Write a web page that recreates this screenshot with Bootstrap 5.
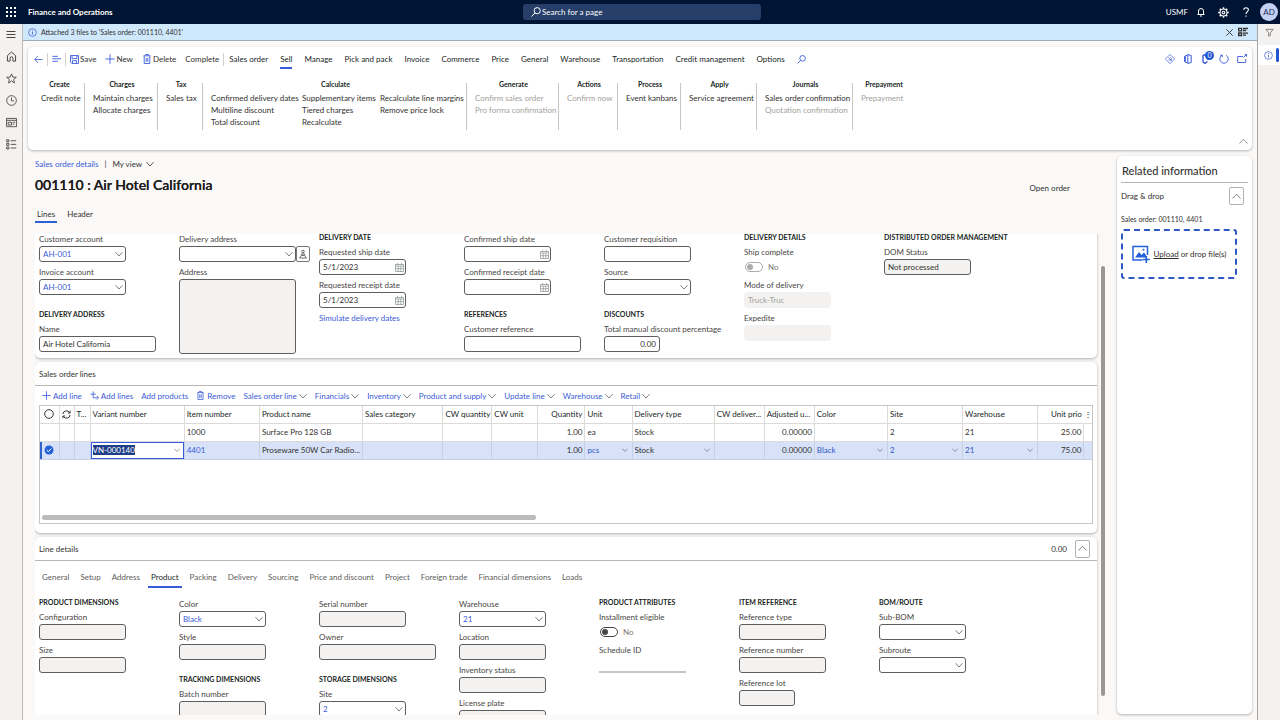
<!DOCTYPE html>
<html lang="en">
<head>
<meta charset="utf-8">
<meta name="viewport" content="width=device-width, initial-scale=1">
<title>Finance and Operations - Sales order 001110</title>
<link href="https://cdn.jsdelivr.net/npm/bootstrap@5.3.0/dist/css/bootstrap.min.css" rel="stylesheet">
<style>
:root{--accent:#3a5bd9;--ink:#323130;--line:#c8c6c4;--chev:url("data:image/svg+xml,%3Csvg xmlns='http://www.w3.org/2000/svg' viewBox='0 0 8 8'%3E%3Cpath d='M.5 2.200 4 6l3.500-3.800' fill='none' stroke='%23605e5c' stroke-width='.8'/%3E%3C/svg%3E");
--cal:url("data:image/svg+xml,%3Csvg xmlns='http://www.w3.org/2000/svg' viewBox='0 0 9 9' fill='none' stroke='%238a9092' stroke-width='.7'%3E%3Cpath d='M.5 1.500h8v7h-8zM.5 3h8M2.500 0v2M6.500 0v2M3.200 3v5.500M5.800 3v5.500M.5 5.700h8'/%3E%3C/svg%3E")}
body{font-family:Lato,"Open Sans",sans-serif;font-size:8px;line-height:12px;color:var(--ink);background:#faf9f8}
svg{fill:none;stroke:currentColor;display:block;flex:none}
.i7{width:8px;height:8px}.i9{width:9px;height:9px}.i10{width:10px;height:10px}.i11{width:11px;height:11px}.i18{width:18px;height:18px}
button,.plain{background:none;border:0;padding:0;color:inherit;font:inherit;text-decoration:none;white-space:nowrap}
.topbar{height:24px;background:#001433;color:#fff;padding:0 2px 0 6px}
.topbar .side{flex:1 1 0}
.topbar .brand{font-weight:700}
.top-icons{gap:12px;margin:0 9px 0 8px}
.search-wrap{width:238px;height:16px;background:#263e68;border-radius:3px;padding:0 8px;gap:1px}
.search-wrap input{background:none;border:0;color:#fff;font-size:8px;padding:0;outline:0;line-height:14px}
.search-wrap input::placeholder{color:#fff;opacity:1}
.avatar{width:18px;height:18px;border-radius:50%;background:#c3d0f2;color:#1b2f5c}
.rail{width:23px;background:#f3f2f1;border-right:1px solid #bdbbb9;padding-top:6px;gap:11px;color:#484644}
.rail-end{width:23px;background:#f3f2f1;border-left:1px solid #a8a6a4;color:#605e5c}
.rail-end .active{background:#fff;color:var(--accent);height:20px;gap:3px;padding-right:1px}
.rail-end .active::after{content:"";width:3px;height:14px;border-radius:2px;background:#1f55d0}
.msg{height:17px;background:#d0e8fb;border-bottom:1px solid #a0abb3;padding:0 9px 0 5px}
.caption7{font-size:7px}
.panel-card{background:#fff;border-radius:5px;box-shadow:0 1px 3px rgba(0,0,0,.28)}
.ribbon{margin:6px 5px 0 5px;height:103px}
.actions{height:24px;padding:0 5px 0 6px}
.actions .act{display:flex;align-items:center;gap:1px;margin-right:9px}
.actions .tabs{gap:12px;margin-left:5px;color:#201f1e;text-shadow:0 0 .3px #201f1e}
.actions .tabs .on,.subtabs .on{box-shadow:inset 0 -2px 0 var(--accent);color:#201f1e}
.sep{width:1px;height:13px;background:#d2d0ce}
.tool{color:var(--accent)}
.groups{display:grid;grid-template-columns:50px 73px 45px 264px 92px 59px 63px 76px 96px 60px;margin-left:7px;padding-top:8px}
.groups section{height:47px;border-right:1px solid #c8c6c4;padding-left:6px}
.groups section:not(:first-child){padding-left:8px}
.groups section:last-child{border:0}
.groups h2{font-size:7px;font-weight:700;line-height:12px;margin:-5px 6px 2px 0;text-align:center;color:#201f1e}
.groups button{display:block;line-height:12px;text-align:left}
.groups button:disabled{color:#a19f9d}
.cols{display:grid;grid-template-columns:91px 78px auto}
.mainpane{padding:8px 6px 5px 12px}
.crumb{gap:6px}
.heading-title{font-size:14px;line-height:20px;font-weight:600;color:#201f1e;text-shadow:0 0 .3px #201f1e}
.titlebar{margin:5px 0 7px}
.status{margin-right:41px;padding-top:6px}
.pagetabs{margin:3px 0 11px}
.pagetabs button{padding:3px 2px}
.pagetabs .on{box-shadow:inset 0 -2px 0 #2f62d0}
.scrollzone{overflow:hidden;flex:1 1 0;min-height:0}
.scrollzone>.stack{margin-right:4px}
.fast{background:#fff;border-radius:5px;box-shadow:0 1px 3px rgba(0,0,0,.3);margin-bottom:4px}
.fast-top{border-radius:0 0 5px 5px;padding:0 4px 2px;margin-top:-3px}
.fast-head{height:24px;border-bottom:1px solid #b9b7b5;padding:0 7px 0 4px}
.fast-grid{padding-bottom:9px}
.vbar{width:4px;height:430px;border-radius:2px;background:#9a9896;margin:32px 6px 0 0}
.fields{display:grid;grid-template-columns:repeat(6,140px) 1fr}
.fields.upper{grid-template-columns:140px 140px 145px 140px 140px 140px 1fr}
.fields h3{font-size:7px;font-weight:700;line-height:13px;margin:0 0 2px;color:#201f1e;white-space:nowrap}
.fields .fld+h3{margin-top:13px}
.nohead{padding-top:2px}
.fld{margin-bottom:4px;width:87px}
.fld.wide{width:117px}.fld.slim{width:56px}
.fld label,.fld .lab{display:block;line-height:13px;height:13px;white-space:nowrap;color:#484644}
.fld .form-control,.fld .form-select{display:block;height:16px;min-height:0;padding:0 3px;font-size:8px;line-height:14px;border:1px solid #605e5c;border-radius:3px;background-color:#fff;color:var(--ink)}
.fld .form-select{background-image:var(--chev);background-size:8px 8px;background-position:right 2px center;color:var(--accent)}
.fld .form-control[readonly]{background-color:#f3f2f1}
.fld .form-control:disabled{background-color:#f3f2f1;border-color:#f3f2f1;color:#a19f9d}
.fld .date{background-image:var(--cal);background-size:9px 9px;background-position:right 1px center;background-repeat:no-repeat}
.fld textarea.form-control{height:75px;resize:none}
.fld .line-only{border:0;border-bottom:2px solid var(--line);border-radius:0}
.addr{width:131px}
.pinbtn{width:14px;height:16px;border:1px solid #797775;border-radius:2px}
.fld .switch{height:16px;min-height:0;margin:0;padding:0;display:flex;align-items:center;gap:5px;color:#797775}
.fld .switch .form-check-input{width:18px;height:10px;margin:0 0 1px 1px;float:none;border-color:#484644;background-color:#fff;background-size:auto 8px;--bs-form-switch-bg:url("data:image/svg+xml,%3Csvg xmlns='http://www.w3.org/2000/svg' viewBox='-4 -4 8 8'%3E%3Ccircle r='3' fill='%23484644'/%3E%3C/svg%3E")}
.fld .switch label{line-height:16px;height:16px;color:inherit;opacity:1}
.fld .switch .form-check-input:disabled{opacity:.45}
.linebar{height:19px;gap:8px;padding-left:7px;color:var(--accent)}
.linebar button{display:flex;align-items:center;gap:2px}
.linebar .chv{color:#605e5c}
.gridbox{border:1px solid var(--line);margin:0 4px;height:119px}
.gridbox table{table-layout:fixed;width:100%;margin:0;font-size:8px;line-height:12px}
.gridbox th,.gridbox td{padding:0 2px;height:17px;border:1px solid #dddbd9;border-top:0;overflow:hidden;text-overflow:ellipsis;white-space:nowrap;font-weight:400;vertical-align:middle}
.gridbox th{color:#201f1e}
.gridbox .tight{padding:0 1px}
.gridbox tr>:first-child{border-left:0}.gridbox tr>:last-child{border-right:0}
.gridbox tbody td{height:18px}
.gridbox .picked td{background:#d7e2f8;border-color:#c6d0e2}
.gridbox .picked td:first-child{box-shadow:inset 2px 0 0 #2f62d0}
.gridbox .pick{background:transparent var(--chev) right 2px center/6px 6px no-repeat;color:#2f55c4;appearance:none;border:0;padding:0;width:100%;font:inherit;line-height:14px}
.gridbox .dark{color:var(--ink)}
.gridbox .edit{padding:0}
.gridbox .edit input{display:block;width:100%;height:17px;border:1px solid var(--accent);padding:0 1px;font:inherit;outline:0;background:#fff var(--chev) right 3px center/6px 6px no-repeat;color:#201f1e}
.gridbox .edit input::selection{background:#1f3f87;color:#fff}
.hbar{width:47%;height:5px;border-radius:3px;background:#bdbbb9;margin:0 0 3px 2px}
.square{width:15px;height:18px;border:1px solid #b3b0ad;border-radius:2px;display:grid;place-items:center;color:#605e5c}
.subtabs{height:27px;gap:5px;padding:0 4px;color:#605e5c;align-items:flex-end}
.subtabs button{padding:0 3px 5px}
.related{width:135px;margin:6px 5px 6px 0}
.related h2{font-size:11px;line-height:14px;margin:8px 4px 0 5px;color:#323130}
.related .rule{border-top:1px solid #b9b7b5}
.dropbox{border:2px dashed #2c58c4;border-radius:3px;height:50px;width:116px}
.dropbox svg{color:#2460d8}
.badge-dot{position:absolute;top:-3px;right:-3px;width:9px;height:9px;border-radius:50%;background:#1f55d0;color:#fff;font-size:7px;line-height:9px;text-align:center}
</style>
</head>
<body class="vh-100 d-flex flex-column overflow-hidden">

<svg width="0" height="0" class="position-absolute" aria-hidden="true">
  <symbol id="waffle" viewBox="0 0 10 10"><path fill="currentColor" stroke="none" d="M0 0h2v2H0zM4 0h2v2H4zM8 0h2v2H8zM0 4h2v2H0zM4 4h2v2H4zM8 4h2v2H8zM0 8h2v2H0zM4 8h2v2H4zM8 8h2v2H8z"/></symbol>
  <symbol id="search" viewBox="0 0 10 10"><circle cx="6.200" cy="3.700" r="3.100"/><path d="M4 6 .5 9.500"/></symbol>
  <symbol id="bell" viewBox="0 0 10 10"><path d="M1.500 7.500h7M2.500 7.500V4a2.500 2.500 0 0 1 5 0v3.500M4 9h2"/></symbol>
  <symbol id="gear" viewBox="0 0 10 10"><circle cx="5" cy="5" r="3.200"/><circle cx="5" cy="5" r="1.200"/><path stroke-width="1.300" d="M5 .2v1.600M5 8.200v1.600M.2 5h1.600M8.200 5h1.600M1.600 1.600l1.100 1.100M7.300 7.300l1.100 1.100M1.600 8.400l1.100-1.100M7.300 2.700l1.100-1.100"/></symbol>
  <symbol id="help" viewBox="0 0 10 10"><path stroke-width="1.100" d="M2.800 2.800C2.800 0 7.400 0 7.400 2.800 7.400 4.600 5 4.600 5 7M5 8.400v1.400"/></symbol>
  <symbol id="info" viewBox="0 0 10 10"><circle cx="5" cy="5" r="4.300" stroke-width=".8"/><path d="M5 4.300v3M5 2.500v1" stroke-width=".9"/></symbol>
  <symbol id="close" viewBox="0 0 10 10"><path d="m1.500 1.500 7 7M8.500 1.500l-7 7"/></symbol>
  <symbol id="msgs" viewBox="0 0 10 10"><path stroke-width="1.300" d="M.6 1.300h3v2.500h-3zM.6 6h3v2.500h-3zM5 1.500h5M5 3.500h3M5 6.200h5M5 8.200h3"/></symbol>
  <symbol id="menu" viewBox="0 0 10 10"><path d="M.5 1.500h9M.5 4.500h9M.5 7.500h9"/></symbol>
  <symbol id="home" viewBox="0 0 10 10"><path stroke-width=".9" d="M1.300 9.200V4.200L5 .9l3.700 3.300v5H6.300V6.500a1.300 1.300 0 0 0-2.600 0v2.700z"/></symbol>
  <symbol id="star" viewBox="0 0 10 10"><path stroke-width=".8" d="m5 .8 1.200 2.900 3.200.2-2.500 2 .8 3.200L5 7.300 2.300 9.100l.8-3.200-2.500-2 3.200-.2z"/></symbol>
  <symbol id="clock" viewBox="0 0 10 10"><circle cx="5" cy="5" r="4.400" stroke-width=".8"/><path stroke-width=".8" d="M5 2.300V5.300h2.200"/></symbol>
  <symbol id="work" viewBox="0 0 10 10"><path stroke-width=".8" d="M.5 1.300h9v7.500h-9zM.5 3h9M2 4.800h3v2.500H2zM6 4.800h2.300M6 6.500h1.500"/></symbol>
  <symbol id="modules" viewBox="0 0 10 10"><path stroke-width=".8" d="M.6.7h2v1.800h-2zM.6 4h2v1.800h-2zM.6 7.300h2v1.800h-2zM4.300 1.600h5M4.300 4.900h5M4.300 8.200h5"/></symbol>
  <symbol id="funnel" viewBox="0 0 10 10"><path stroke-width=".8" d="M1 1.500h8L6 5.200v3L4 9V5.200z"/></symbol>
  <symbol id="back" viewBox="0 0 10 10"><path stroke-width=".9" d="M9.500 5H.8M4.500 1.200.8 5l3.700 3.800"/></symbol>
  <symbol id="lines" viewBox="0 0 10 10"><path d="M.5 1.500h6M.5 4.200h9.500M.5 7h6"/></symbol>
  <symbol id="save" viewBox="0 0 10 10"><path d="M.6.6h8.800v8.800H2L.6 8zM2.300 1v3h5.400V1M2.800 9V6.300h4.400V9"/></symbol>
  <symbol id="plus" viewBox="0 0 10 10"><path stroke-width=".9" d="M5 .3v9.400M.3 5h9.400"/></symbol>
  <symbol id="trash" viewBox="0 0 10 10"><path stroke-width=".9" d="M1.500 1.800h7M3.500 1.500V.5h3v1M2.200 2v7.500h5.600V2M4.200 3.800v4M5.800 3.800v4"/></symbol>
  <symbol id="diamond" viewBox="0 0 10 10"><path stroke-width=".7" d="M5 .4 9.600 5 5 9.600.4 5zM3.300 3.300l3.400 3.400M5.300 3.300 6.800 5 5.300 6.700M3.500 5l1.500 1.700"/></symbol>
  <symbol id="office" viewBox="0 0 10 10"><path stroke-width="1" d="M4.800.6 8.200 1.500v7l-3.400.9zM4.800 1 1.800 2.200v5.600l3 1.200"/><path stroke-width="1.500" d="M2 2.200v5.600"/></symbol>
  <symbol id="clip" viewBox="0 0 10 10"><path stroke-width="1.400" d="M2 1h5v5M2 1v7l2 1.500 2.500-2"/></symbol>
  <symbol id="refresh" viewBox="0 0 10 10"><path stroke-width=".9" d="M3 1.300a4.200 4.200 0 1 0 4 0M3.300 3.200V1.200H1.200"/></symbol>
  <symbol id="popout" viewBox="0 0 10 10"><path stroke-width=".9" d="M6 2.500H.7v6h8V5M6.500 3.500l3-3M7.500.6h2v2"/></symbol>
  <symbol id="up" viewBox="0 0 8 8"><path stroke-width=".7" d="M.4 5.800 4 2l3.600 3.800"/></symbol>
  <symbol id="down" viewBox="0 0 8 8"><path stroke-width=".8" d="M.4 2.200 4 6l3.600-3.800"/></symbol>
  <symbol id="addmany" viewBox="0 0 10 10"><path stroke-width=".9" d="M3.500.5v7h5.500M.5 3.500h6M7.500 5.500l2 2-2 2"/></symbol>
  <symbol id="loop" viewBox="0 0 10 10"><path stroke-width="1" d="M1 4.500A4 4 0 0 1 8.500 3M9 .8V3.300H6.500M9 5.500A4 4 0 0 1 1.500 7M1 9.200V6.700h2.500"/></symbol>
  <symbol id="ring" viewBox="0 0 10 10"><circle cx="5" cy="5" r="4.300" stroke-width=".9"/></symbol>
  <symbol id="tick" viewBox="0 0 10 10"><circle cx="5" cy="5" r="4.500" fill="#2460d8" stroke="none"/><path stroke="#fff" d="m2.800 5.200 1.600 1.500 2.900-3.200"/></symbol>
  <symbol id="person" viewBox="0 0 10 10"><circle cx="5" cy="2.500" r="1.300" stroke-width=".7"/><path stroke-width=".7" d="M5 3.800v2.500M3.500 6.500 1.500 9h7l-2-2.500zM3.800 4.500 3 6.300M6.200 4.500 7 6.300"/></symbol>
  <symbol id="picture" viewBox="0 0 18 18"><path stroke-width="1.500" d="M10.500 15H1V1.500h14.500V10"/><path fill="currentColor" stroke="none" d="M3 12.500 7 7l2.500 3L12 7.500l2 2.500v2.500z"/><circle cx="11.500" cy="4.700" r="1" fill="currentColor" stroke="none"/><path stroke-width="1.600" d="M14.300 11v7M10.800 14.500h7"/></symbol>
</svg>

<header class="topbar d-flex align-items-center flex-shrink-0">
  <div class="side d-flex align-items-center">
    <button aria-label="Apps"><svg class="i10"><use href="#waffle"/></svg></button>
    <span class="brand ms-2 ps-1">Finance and Operations</span>
  </div>
  <label class="search-wrap d-flex align-items-center"><svg class="i10"><use href="#search"/></svg><input type="text" aria-label="Search" placeholder="Search for a page"></label>
  <div class="side d-flex justify-content-end align-items-center">
    <span>USMF</span>
    <div class="top-icons d-flex align-items-center">
      <button aria-label="Notifications"><svg class="i10"><use href="#bell"/></svg></button>
      <button aria-label="Settings"><svg class="i11"><use href="#gear"/></svg></button>
      <button aria-label="Help"><svg class="i10"><use href="#help"/></svg></button>
    </div>
    <span class="avatar d-flex align-items-center justify-content-center">AD</span>
  </div>
</header>

<div class="d-flex flex-fill overflow-hidden">
  <nav class="rail d-flex flex-column align-items-center flex-shrink-0" aria-label="Navigation">
    <button aria-label="Menu"><svg class="i10"><use href="#menu"/></svg></button>
    <button aria-label="Home"><svg class="i11"><use href="#home"/></svg></button>
    <button aria-label="Favorites"><svg class="i11"><use href="#star"/></svg></button>
    <button aria-label="Recent"><svg class="i11"><use href="#clock"/></svg></button>
    <button aria-label="Workspaces"><svg class="i11"><use href="#work"/></svg></button>
    <button aria-label="Modules"><svg class="i11"><use href="#modules"/></svg></button>
  </nav>

  <main class="flex-fill d-flex flex-column overflow-hidden">
    <div class="msg d-flex align-items-center gap-1 flex-shrink-0">
      <svg class="i9 tool"><use href="#info"/></svg><span class="flex-fill caption7">Attached 3 files to 'Sales order: 001110, 4401'</span>
      <button aria-label="Close"><svg class="i9"><use href="#close"/></svg></button>
      <button aria-label="Messages"><svg class="i10"><use href="#msgs"/></svg></button>
    </div>

    <div class="ribbon panel-card flex-shrink-0 d-flex flex-column">
      <div class="actions d-flex align-items-center">
        <button class="tool me-1" aria-label="Back"><svg class="i9"><use href="#back"/></svg></button>
        <span class="sep me-1"></span>
        <button class="tool me-1" aria-label="Show list"><svg class="i9"><use href="#lines"/></svg></button>
        <span class="sep me-1"></span>
        <button class="act"><svg class="i9 tool"><use href="#save"/></svg>Save</button>
        <button class="act"><svg class="i10 tool"><use href="#plus"/></svg>New</button>
        <button class="act"><svg class="i10 tool"><use href="#trash"/></svg>Delete</button>
        <button class="me-1">Complete</button>
        <span class="sep"></span>
        <nav class="tabs d-flex align-items-center">
          <button>Sales order</button><button class="on py-1">Sell</button><button>Manage</button><button>Pick and pack</button><button>Invoice</button><button>Commerce</button><button>Price</button><button>General</button><button>Warehouse</button><button>Transportation</button><button>Credit management</button><button>Options</button>
          <button class="tool" aria-label="Find action"><svg class="i9"><use href="#search"/></svg></button>
        </nav>
        <div class="tool d-flex align-items-center gap-2 ms-auto">
          <button aria-label="Personalize"><svg class="i10"><use href="#diamond"/></svg></button>
          <button aria-label="Open in Office"><svg class="i10"><use href="#office"/></svg></button>
          <button class="position-relative" aria-label="Attachments"><svg class="i10"><use href="#clip"/></svg><span class="badge-dot">0</span></button>
          <button aria-label="Refresh"><svg class="i10"><use href="#refresh"/></svg></button>
          <button aria-label="Open in new window"><svg class="i10"><use href="#popout"/></svg></button>
        </div>
      </div>
      <div class="groups mt-1">
        <section><h2>Create</h2><button>Credit note</button></section>
        <section><h2>Charges</h2><button>Maintain charges</button><button>Allocate charges</button></section>
        <section><h2>Tax</h2><button>Sales tax</button></section>
        <section><h2>Calculate</h2><div class="cols"><div><button>Confirmed delivery dates</button><button>Multiline discount</button><button>Total discount</button></div><div><button>Supplementary items</button><button>Tiered charges</button><button>Recalculate</button></div><div><button>Recalculate line margins</button><button>Remove price lock</button></div></div></section>
        <section><h2>Generate</h2><button disabled>Confirm sales order</button><button disabled>Pro forma confirmation</button></section>
        <section><h2>Actions</h2><button disabled>Confirm now</button></section>
        <section><h2>Process</h2><button>Event kanbans</button></section>
        <section><h2>Apply</h2><button>Service agreement</button></section>
        <section><h2>Journals</h2><button>Sales order confirmation</button><button disabled>Quotation confirmation</button></section>
        <section><h2>Prepayment</h2><button disabled>Prepayment</button></section>
      </div>
      <button class="ms-auto mt-auto me-1 mb-1 text-secondary" aria-label="Collapse"><svg class="i9"><use href="#up"/></svg></button>
    </div>

    <div class="d-flex flex-fill overflow-hidden">
      <div class="mainpane flex-fill d-flex flex-column overflow-hidden">
        <div class="crumb d-flex align-items-center"><a href="#" class="plain tool">Sales order details</a><span>|</span><button class="d-flex align-items-center gap-1">My view <svg class="i7"><use href="#down"/></svg></button></div>
        <div class="titlebar d-flex align-items-center">
          <h1 class="heading-title m-0 flex-fill">001110 : Air Hotel California</h1><span class="status">Open order</span>
        </div>
        <nav class="pagetabs d-flex gap-2"><button class="on">Lines</button><button>Header</button></nav>

        <div class="d-flex flex-fill overflow-hidden">
          <div class="scrollzone"><div class="stack">
            <section class="fast fast-top">
              <div class="fields upper">
                <div class="nohead">
                  <div class="fld"><label for="ca">Customer account</label><select id="ca" class="form-select"><option>AH-001</option></select></div>
                  <div class="fld"><label for="ia">Invoice account</label><select id="ia" class="form-select"><option>AH-001</option></select></div>
                  <h3>DELIVERY ADDRESS</h3>
                  <div class="fld wide mb-0"><label for="nm">Name</label><input id="nm" class="form-control" value="Air Hotel California"></div>
                </div>
                <div class="nohead">
                  <div class="fld wide"><label for="da">Delivery address</label><div class="addr d-flex"><select id="da" class="form-select"><option></option></select><button class="pinbtn d-flex align-items-center justify-content-center flex-shrink-0" aria-label="Address options"><svg class="i10"><use href="#person"/></svg></button></div></div>
                  <div class="fld wide mb-0"><label for="ad">Address</label><textarea id="ad" class="form-control" readonly></textarea></div>
                </div>
                <div>
                  <h3>DELIVERY DATE</h3>
                  <div class="fld"><label for="rs">Requested ship date</label><input id="rs" class="form-control date" value="5/1/2023"></div>
                  <div class="fld"><label for="rr">Requested receipt date</label><input id="rr" class="form-control date" value="5/1/2023"></div>
                  <a href="#" class="plain tool">Simulate delivery dates</a>
                </div>
                <div class="nohead">
                  <div class="fld"><label for="cs">Confirmed ship date</label><input id="cs" class="form-control date"></div>
                  <div class="fld"><label for="cr">Confirmed receipt date</label><input id="cr" class="form-control date"></div>
                  <h3>REFERENCES</h3>
                  <div class="fld wide"><label for="cf">Customer reference</label><input id="cf" class="form-control"></div>
                </div>
                <div class="nohead">
                  <div class="fld"><label for="cq">Customer requisition</label><input id="cq" class="form-control"></div>
                  <div class="fld"><label for="so">Source</label><select id="so" class="form-select"><option></option></select></div>
                  <h3>DISCOUNTS</h3>
                  <div class="fld slim"><label for="td">Total manual discount percentage</label><input id="td" class="form-control text-end" value="0.00"></div>
                </div>
                <div>
                  <h3>DELIVERY DETAILS</h3>
                  <div class="fld"><span class="lab">Ship complete</span><div class="form-check form-switch switch"><input class="form-check-input" type="checkbox" id="sc" disabled><label for="sc">No</label></div></div>
                  <div class="fld"><label for="md">Mode of delivery</label><input id="md" class="form-control" value="Truck-Truc" disabled></div>
                  <div class="fld"><label for="ex">Expedite</label><input id="ex" class="form-control" disabled></div>
                </div>
                <div>
                  <h3>DISTRIBUTED ORDER MANAGEMENT</h3>
                  <div class="fld"><label for="ds">DOM Status</label><input id="ds" class="form-control" value="Not processed" readonly></div>
                </div>
              </div>
            </section>

            <section class="fast fast-grid">
              <div class="fast-head d-flex align-items-center">Sales order lines</div>
              <div class="linebar d-flex align-items-center">
                <button><svg class="i9"><use href="#plus"/></svg>Add line</button><button><svg class="i9"><use href="#addmany"/></svg>Add lines</button><button>Add products</button><button><svg class="i9"><use href="#trash"/></svg>Remove</button>
                <button>Sales order line<svg class="i7 chv"><use href="#down"/></svg></button><button>Financials<svg class="i7 chv"><use href="#down"/></svg></button><button>Inventory<svg class="i7 chv"><use href="#down"/></svg></button><button>Product and supply<svg class="i7 chv"><use href="#down"/></svg></button><button>Update line<svg class="i7 chv"><use href="#down"/></svg></button><button>Warehouse<svg class="i7 chv"><use href="#down"/></svg></button><button>Retail<svg class="i7 chv"><use href="#down"/></svg></button>
              </div>
              <div class="gridbox d-flex flex-column">
                <table>
                  <colgroup><col style="width:19px"><col style="width:15px"><col style="width:16px"><col style="width:94px"><col style="width:75px"><col style="width:103px"><col style="width:80px"><col style="width:49px"><col style="width:46px"><col style="width:47px"><col style="width:47px"><col style="width:82px"><col style="width:50px"><col style="width:50px"><col style="width:73px"><col style="width:75px"><col style="width:75px"><col style="width:46px"><col style="width:8px"></colgroup>
                  <thead><tr><th><svg class="i10 mx-auto"><use href="#ring"/></svg></th><th><svg class="i9 mx-auto"><use href="#loop"/></svg></th><th>T...</th><th>Variant number</th><th>Item number</th><th>Product name</th><th>Sales category</th><th class="text-end tight">CW quantity</th><th>CW unit</th><th class="text-end">Quantity</th><th>Unit</th><th>Delivery type</th><th>CW deliver...</th><th>Adjusted u...</th><th>Color</th><th>Site</th><th>Warehouse</th><th class="text-end border-end-0">Unit prio</th><th class="text-center px-0 border-start-0">⋮</th></tr></thead>
                  <tbody>
                    <tr><td></td><td></td><td></td><td></td><td>1000</td><td>Surface Pro 128 GB</td><td></td><td></td><td></td><td class="text-end">1.00</td><td>ea</td><td>Stock</td><td></td><td class="text-end">0.00000</td><td></td><td>2</td><td>21</td><td class="text-end">25.00</td><td></td></tr>
                    <tr class="picked"><td><svg class="i10 mx-auto"><use href="#tick"/></svg></td><td></td><td></td><td class="edit"><input id="variant" aria-label="Variant number" value="VN-000140"></td><td><a href="#" class="plain tool">4401</a></td><td>Proseware 50W Car Radio...</td><td></td><td></td><td></td><td class="text-end">1.00</td>
                    <td><select class="pick" aria-label="Unit"><option>pcs</option></select></td><td><select class="pick dark" aria-label="Delivery type"><option>Stock</option></select></td><td></td><td class="text-end">0.00000</td><td><select class="pick" aria-label="Color"><option>Black</option></select></td><td><select class="pick" aria-label="Site"><option>2</option></select></td><td><select class="pick" aria-label="Warehouse"><option>21</option></select></td><td class="text-end">75.00</td><td></td></tr>
                  </tbody>
                </table>
                <div class="hbar mt-auto"></div>
              </div>
            </section>

            <section class="fast">
              <div class="fast-head d-flex align-items-center">Line details<span class="ms-auto me-2">0.00</span><button class="square" aria-label="Collapse"><svg class="i9"><use href="#up"/></svg></button></div>
              <nav class="subtabs d-flex"><button>General</button><button>Setup</button><button>Address</button><button class="on">Product</button><button>Packing</button><button>Delivery</button><button>Sourcing</button><button>Price and discount</button><button>Project</button><button>Foreign trade</button><button>Financial dimensions</button><button>Loads</button></nav>
              <div class="fields px-1 pt-2">
                <div>
                  <h3>PRODUCT DIMENSIONS</h3>
                  <div class="fld"><label for="co">Configuration</label><input id="co" class="form-control" readonly></div>
                  <div class="fld"><label for="sz">Size</label><input id="sz" class="form-control" readonly></div>
                </div>
                <div class="nohead">
                  <div class="fld"><label for="cl">Color</label><select id="cl" class="form-select"><option>Black</option></select></div>
                  <div class="fld"><label for="st">Style</label><input id="st" class="form-control" readonly></div>
                  <h3>TRACKING DIMENSIONS</h3>
                  <div class="fld"><label for="bn">Batch number</label><input id="bn" class="form-control" readonly></div>
                </div>
                <div class="nohead">
                  <div class="fld"><label for="sn">Serial number</label><input id="sn" class="form-control" readonly></div>
                  <div class="fld wide"><label for="ow">Owner</label><input id="ow" class="form-control" readonly></div>
                  <h3>STORAGE DIMENSIONS</h3>
                  <div class="fld"><label for="si">Site</label><select id="si" class="form-select"><option>2</option></select></div>
                </div>
                <div class="nohead">
                  <div class="fld"><label for="wh">Warehouse</label><select id="wh" class="form-select"><option>21</option></select></div>
                  <div class="fld"><label for="lo">Location</label><input id="lo" class="form-control" readonly></div>
                  <div class="fld"><label for="is">Inventory status</label><input id="is" class="form-control" readonly></div>
                  <div class="fld"><label for="lp">License plate</label><input id="lp" class="form-control" readonly></div>
                </div>
                <div>
                  <h3>PRODUCT ATTRIBUTES</h3>
                  <div class="fld"><span class="lab">Installment eligible</span><div class="form-check form-switch switch"><input class="form-check-input" type="checkbox" id="ie"><label for="ie">No</label></div></div>
                  <div class="fld"><label for="sd">Schedule ID</label><input id="sd" class="form-control line-only"></div>
                </div>
                <div>
                  <h3>ITEM REFERENCE</h3>
                  <div class="fld"><label for="rt">Reference type</label><input id="rt" class="form-control" readonly></div>
                  <div class="fld"><label for="rn">Reference number</label><input id="rn" class="form-control" readonly></div>
                  <div class="fld slim"><label for="rl">Reference lot</label><input id="rl" class="form-control" readonly></div>
                </div>
                <div>
                  <h3>BOM/ROUTE</h3>
                  <div class="fld"><label for="sb">Sub-BOM</label><select id="sb" class="form-select"><option></option></select></div>
                  <div class="fld"><label for="sr">Subroute</label><select id="sr" class="form-select"><option></option></select></div>
                </div>
              </div>
            </section>
          </div></div>
          <div class="vbar flex-shrink-0"></div>
        </div>
      </div>

      <aside class="related panel-card flex-shrink-0">
        <h2>Related information</h2>
        <div class="rule d-flex align-items-center mx-1 pt-1 mt-1"><span class="flex-fill">Drag &amp; drop</span><button class="square me-1" aria-label="Collapse"><svg class="i9"><use href="#up"/></svg></button></div>
        <div class="mx-1 mt-2"><span class="caption7">Sales order: 001110, 4401</span>
          <div class="dropbox d-flex align-items-center justify-content-center gap-1 mt-1"><svg class="i18"><use href="#picture"/></svg><span><a href="#" class="text-reset text-decoration-underline">Upload</a> or drop file(s)</span></div>
        </div>
      </aside>
    </div>
  </main>

  <aside class="rail-end d-flex flex-column flex-shrink-0" aria-label="Panes">
    <button class="d-flex justify-content-center py-1" aria-label="Filter"><svg class="i9"><use href="#funnel"/></svg></button>
    <button class="active d-flex align-items-center justify-content-end mt-1" aria-label="Related information"><svg class="i9"><use href="#info"/></svg></button>
  </aside>
</div>

<script src="https://cdn.jsdelivr.net/npm/bootstrap@5.3.0/dist/js/bootstrap.bundle.min.js"></script>
<script>
const v = document.getElementById('variant');
v.focus({preventScroll: true});
v.select();
</script>
</body>
</html>
